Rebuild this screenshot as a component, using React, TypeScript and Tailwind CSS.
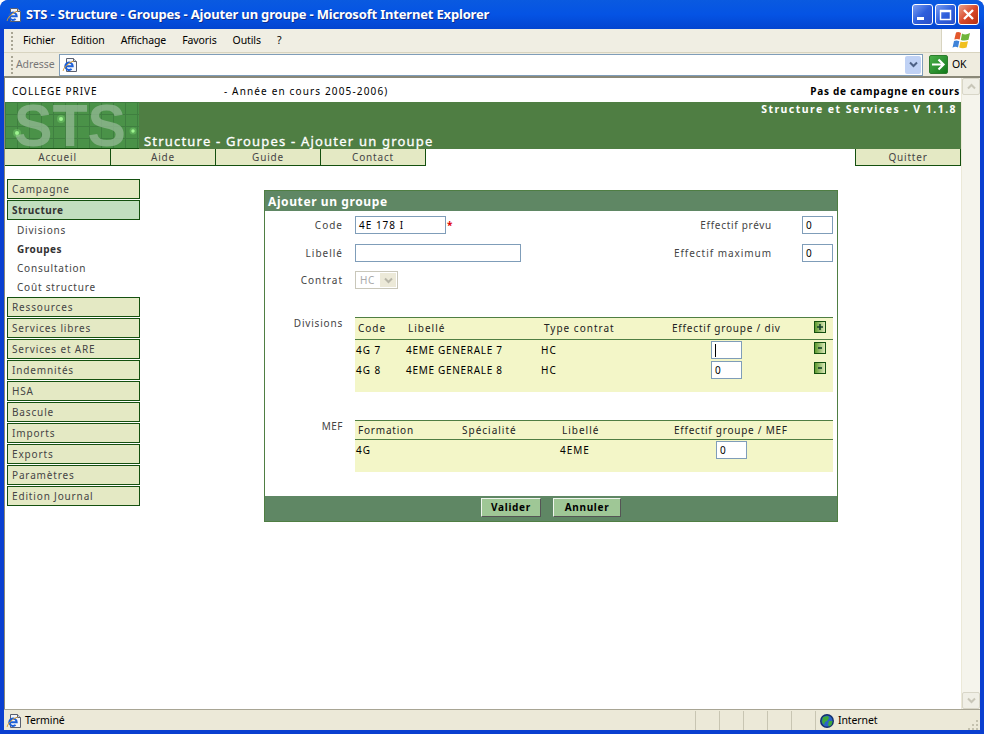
import React from "react";

const IeIcon = ({ size = 16 }: { size?: number }) => (
  <svg width={size} height={size} viewBox="0 0 16 16" className="shrink-0">
    <path d="M4.5 1.5h7l3 3v10h-10z" fill="#f4f6fa" stroke="#5a6070" strokeWidth="1" />
    <path d="M11.5 1.5v3h3" fill="#cfd4de" stroke="#5a6070" strokeWidth="1" />
    <path d="M3.5 9.2h7.2a3.7 3.7 0 1 0-1.1 2.7" fill="none" stroke="#1c5fd8" strokeWidth="2" />
    <path d="M1.2 13.8C1 11.5 7 5 11.5 4.2" fill="none" stroke="#d99a28" strokeWidth="1" />
  </svg>
);

const WinBtn = ({ kind }: { kind: "min" | "max" | "close" }) => (
  <div
    className={
      kind === "close"
        ? "w-[21px] h-[21px] rounded-[3px] border border-white bg-gradient-to-br from-[#e8a08a] via-[#d9482a] to-[#b5300f] flex items-center justify-center"
        : "w-[21px] h-[21px] rounded-[3px] border border-white bg-gradient-to-br from-[#7d9df0] via-[#2f5fdc] to-[#2a4fc8] flex items-center justify-center"
    }
  >
    <svg width="15" height="15" viewBox="0 0 15 15">
      {kind === "min" && <rect x="2" y="10" width="7" height="3" fill="#fff" />}
      {kind === "max" && (
        <path d="M2.5 3.5h10v9h-10z M2.5 4.5h10" fill="none" stroke="#fff" strokeWidth="1.5" />
      )}
      {kind === "close" && <path d="M3 3l9 9M12 3l-9 9" stroke="#fff" strokeWidth="2.4" />}
    </svg>
  </div>
);

const Grip = () => (
  <div className="w-[2px] h-[18px] ml-[7px] shrink-0 bg-[repeating-linear-gradient(to_bottom,#a8a594_0,#a8a594_2px,transparent_2px,transparent_4px)]" />
);

const XpLogo = () => (
  <svg width="20" height="19" viewBox="0 0 20 19">
    <path d="M5 1.5Q7.5.5 10 2L8.7 8.5Q6 7.3 3.3 8.5z" fill="#e2572c" />
    <path d="M11 2.5Q14.5 4.5 19 2L17.5 8.8Q13.5 10.2 9.8 9z" fill="#6fb53a" />
    <path d="M3 10Q5.5 8.8 8.3 10.2L7 16.5Q4 15 1.5 16.8z" fill="#3f83d8" />
    <path d="M9.5 10.5Q13 11.7 17 10.2L15.6 16.5Q11.5 18 8.2 16.5z" fill="#f0c020" />
  </svg>
);

const Go = () => (
  <div className="w-[19px] h-[19px] rounded-[2px] bg-gradient-to-br from-[#4ab04a] to-[#0f7a1a] border border-[#2d7d2d] flex items-center justify-center">
    <svg width="15" height="13" viewBox="0 0 15 13">
      <path d="M1 6.5h11M7.5 1.5l5 5-5 5" fill="none" stroke="#fff" strokeWidth="2.2" />
    </svg>
  </div>
);

const Chevron = ({ color, up }: { color: string; up?: boolean }) => (
  <svg width="9" height="7" viewBox="0 0 9 7">
    <path d={up ? "M1 5.5l3.5-3.5L8 5.5" : "M1 1.5l3.5 3.5L8 1.5"} fill="none" stroke={color} strokeWidth="2" />
  </svg>
);

const StsLogo = () => (
  <svg width="134" height="47" viewBox="0 0 134 47" className="shrink-0">
    <defs>
      <pattern id="g" width="12" height="12" patternUnits="userSpaceOnUse">
        <rect width="12" height="12" fill="#4a9248" />
        <path d="M0 .5h12M.5 0v12" stroke="#3f7f40" strokeWidth="1" />
      </pattern>
    </defs>
    <rect width="134" height="47" fill="url(#g)" />
    <text x="9" y="44" fontFamily="'Liberation Sans',sans-serif" fontWeight="700" fontSize="60" fill="#94b894" fillOpacity="0.75" textLength="112" lengthAdjust="spacingAndGlyphs" letterSpacing="0">
      STS
    </text>
    <circle cx="56" cy="17" r="4" fill="#8ff080" fillOpacity="0.3" />
    <circle cx="56" cy="17" r="2" fill="#9ff590" />
    <circle cx="12" cy="31" r="4" fill="#8ff080" fillOpacity="0.3" />
    <circle cx="12" cy="31" r="2" fill="#9ff590" />
    <circle cx="128" cy="29" r="3.5" fill="#8ff080" fillOpacity="0.3" />
    <circle cx="128" cy="29" r="1.7" fill="#9ff590" />
    <rect y="46" width="134" height="1" fill="#14500f" />
  </svg>
);

const NavCell = ({ label, w }: { label: string; w: string }) => (
  <div className={`${w} h-[17px] bg-[#e4e9c4] border-r border-b border-[#14500f] text-center text-[#444] leading-[16px] tracking-[0.8px]`}>{label}</div>
);

const SideBtn = ({ label, active }: { label: string; active?: boolean }) => (
  <div
    className={
      active
        ? "h-[20px] mb-[1px] pl-[4px] border border-[#14500f] bg-[#c2dfc0] text-[#333] font-bold leading-[19px] tracking-[0.5px]"
        : "h-[20px] mb-[1px] pl-[4px] border border-[#14500f] bg-[#e4e9c4] text-[#444] leading-[19px] tracking-[0.85px]"
    }
  >
    {label}
  </div>
);

const SubItem = ({ label, bold }: { label: string; bold?: boolean }) => (
  <div className={bold ? "h-[19px] pl-[10px] leading-[19px] text-[#333] font-bold tracking-[0.5px]" : "h-[19px] pl-[10px] leading-[19px] text-[#444] tracking-[0.8px]"}>{label}</div>
);

const Field = ({ w, value, caret }: { w: string; value?: string; caret?: boolean }) => (
  <div className={`${w} h-[18px] shrink-0 bg-white border border-[#7f9db9] pl-[3px] leading-[16px] text-black flex items-center`}>
    {caret ? <div className="w-px h-[13px] bg-black" /> : value}
  </div>
);

const SmallBtn = ({ plus }: { plus?: boolean }) => (
  <div className="w-[12px] h-[12px] border border-[#14500f] bg-gradient-to-r from-[#5d9a2d] to-[#dfe9b8] flex items-center justify-center">
    <svg width="6" height="6" viewBox="0 0 6 6">
      <path d={plus ? "M0 3h6M3 0v6" : "M1 3h4"} stroke="#143f2a" strokeWidth="1.6" />
    </svg>
  </div>
);

const Bevel = ({ label, w }: { label: string; w: string }) => (
  <div className={`${w} h-[19px] bg-[#9fc796] border border-t-[#f0f5ee] border-l-[#f0f5ee] border-r-[#555] border-b-[#555] text-center font-bold text-black leading-[17px] text-[10px] tracking-[0.7px]`}>{label}</div>
);

const Globe = () => (
  <svg width="16" height="16" viewBox="0 0 16 16" className="shrink-0">
    <circle cx="8" cy="8" r="7" fill="#14306e" />
    <circle cx="8" cy="8" r="5.5" fill="#2a63c8" />
    <path d="M4 4l5-1 1 2-2 3-2 1-1 3-2-3zM10 8l3.5 0-1 4-2.5 1.5-1-2z" fill="#3fa83a" />
  </svg>
);

const ResizeGrip = () => (
  <svg width="12" height="12" viewBox="0 0 12 12" className="shrink-0">
    <path d="M9 2h2v2H9zM5 6h2v2H5zM9 6h2v2H9zM1 10h2v2H1zM5 10h2v2H5zM9 10h2v2H9z" fill="#c4c1ae" />
  </svg>
);

const menu = ["Fichier", "Edition", "Affichage", "Favoris", "Outils", "?"];
const sideTop = ["Ressources", "Services libres", "Services et ARE", "Indemnités", "HSA", "Bascule", "Imports", "Exports", "Paramètres", "Edition Journal"];

export default function App() {
  return (
    <div className="w-[984px] h-[734px] overflow-hidden flex flex-col bg-[#0a3fd0] rounded-t-[8px] [font-family:'DejaVu_Sans',Verdana,sans-serif] text-[10px] tracking-[1px]">
      {/* Title bar */}
      <div className="h-[29px] shrink-0 flex items-center pl-[6px] pr-[5px] rounded-t-[8px] bg-gradient-to-b from-[#0a5ae0] via-[#0553e4] to-[#0345d0]">
        <IeIcon />
        <div className="ml-[4px] pt-px flex-1 text-white font-bold text-[13px] tracking-[-0.18px] [font-family:'Liberation_Sans',sans-serif] [text-shadow:1px_1px_#0f2f90]">
          STS - Structure - Groupes - Ajouter un groupe - Microsoft Internet Explorer
        </div>
        <div className="flex gap-[2px]">
          <WinBtn kind="min" />
          <WinBtn kind="max" />
          <WinBtn kind="close" />
        </div>
      </div>

      <div className="flex-1 min-h-0 flex flex-col mx-[4px] mb-[4px] bg-[#ece9d8]">
        {/* Menu bar */}
        <div className="h-[24px] shrink-0 flex items-center bg-[#f0eee3] border-b border-[#d8d4c0] tracking-[-0.1px] text-[10.5px] [font-family:'Liberation_Sans',sans-serif] text-black">
          <Grip />
          <div className="flex flex-1 ml-[10px] gap-[16px]">
            {menu.map((m) => (
              <span key={m}>{m}</span>
            ))}
          </div>
          <div className="w-[39px] h-full bg-white border-l border-[#d8d4c0] flex items-center justify-center">
            <XpLogo />
          </div>
        </div>
        {/* Address bar */}
        <div className="h-[25px] shrink-0 flex items-center bg-[#efecdf] border-b-2 border-[#8a8878] tracking-[-0.1px] text-[10.5px] [font-family:'Liberation_Sans',sans-serif]">
          <Grip />
          <span className="ml-[2px] w-[44px] pl-px text-[#777]">Adresse</span>
          <div className="w-[864px] h-[22px] bg-white border border-[#7f9db9] flex items-center pl-[2px] pr-[1px]">
            <IeIcon />
            <div className="flex-1" />
            <div className="w-[16px] h-[18px] rounded-[2px] bg-[#c0d2f5] flex items-center justify-center">
              <Chevron color="#4d6185" />
            </div>
          </div>
          <div className="ml-[6px]">
            <Go />
          </div>
          <span className="ml-[4px] text-black">OK</span>
        </div>

        {/* Page + scrollbar */}
        <div className="flex-1 min-h-0 flex border-l border-[#8a8878]">
          <div className="flex-1 min-w-0 bg-white flex flex-col">
            <div className="h-[24px] shrink-0 flex items-center text-black pl-[7px] pr-px pt-[3px]">
              <span className="w-[212px]">COLLEGE PRIVE</span>
              <span className="flex-1 tracking-[1.15px]">- Année en cours 2005-2006)</span>
              <span className="font-bold tracking-[0.75px]">Pas de campagne en cours</span>
            </div>
            <div className="h-[47px] shrink-0 flex bg-[#4f7e43] text-white">
              <StsLogo />
              <div className="flex-1 flex flex-col justify-between pl-[5px] pr-[4px] pb-px font-bold">
                <div className="text-right text-[10.5px] leading-[14px] tracking-[1.45px]">Structure et Services - V 1.1.8</div>
                <div className="text-[13px] leading-[14px] font-normal tracking-[1.2px] [-webkit-text-stroke:0.3px_#fff]">Structure - Groupes - Ajouter un groupe</div>
              </div>
            </div>
            <div className="h-[17px] shrink-0 flex">
              <NavCell label="Accueil" w="w-[106px]" />
              <NavCell label="Aide" w="w-[105px]" />
              <NavCell label="Guide" w="w-[105px]" />
              <NavCell label="Contact" w="w-[105px]" />
              <div className="flex-1" />
              <div className="w-[106px] h-[17px] bg-[#e4e9c4] border border-t-0 border-[#14500f] text-center text-[#444] leading-[16px] tracking-[0.8px]">Quitter</div>
            </div>

            <div className="flex-1 flex">
              <div className="w-[133px] ml-[2px] mt-[13px] shrink-0">
                <SideBtn label="Campagne" />
                <SideBtn label="Structure" active />
                <div>
                  <SubItem label="Divisions" />
                  <SubItem label="Groupes" bold />
                  <SubItem label="Consultation" />
                  <SubItem label="Coût structure" />
                </div>
                {sideTop.map((s) => (
                  <SideBtn key={s} label={s} />
                ))}
              </div>

              {/* Form */}
              <div className="w-[574px] h-[332px] ml-[124px] mt-[24px] border border-[#4f7e43] flex flex-col text-[#444]">
                <div className="h-[20px] shrink-0 bg-[#5f8764] text-white font-bold text-[12px] leading-[21px] pl-[3px] tracking-[0.6px]">Ajouter un groupe</div>
                <div className="flex-1 pt-[5px]">
                  <div className="flex h-[18px] items-center">
                    <div className="w-[78px] text-right">Code</div>
                    <div className="ml-[12px]"><Field w="w-[91px]" value="4E 178 I" /></div>
                    <span className="ml-px text-[#e00000] font-bold">*</span>
                    <div className="flex-1 text-right tracking-[0.7px]">Effectif prévu</div>
                    <div className="ml-[30px] mr-[4px]"><Field w="w-[31px]" value="0" /></div>
                  </div>
                  <div className="flex h-[18px] items-center mt-[10px]">
                    <div className="w-[78px] text-right">Libellé</div>
                    <div className="ml-[12px]"><Field w="w-[166px]" /></div>
                    <div className="flex-1 text-right tracking-[0.95px]">Effectif maximum</div>
                    <div className="ml-[30px] mr-[4px]"><Field w="w-[31px]" value="0" /></div>
                  </div>
                  <div className="flex h-[18px] items-center mt-[9px]">
                    <div className="w-[78px] text-right">Contrat</div>
                    <div className="ml-[12px] w-[43px] h-[18px] border border-[#c9c7ba] flex items-center pl-[4px] pr-px text-[#aaa] tracking-[0.5px]">
                      <span className="flex-1">HC</span>
                      <div className="w-[16px] h-[14px] bg-[#ece9d8] flex items-center justify-center">
                        <Chevron color="#b8b6a8" />
                      </div>
                    </div>
                  </div>

                  {/* Divisions */}
                  <div className="flex mt-[28px]">
                    <div className="w-[78px] text-right leading-[13px] tracking-[0.8px]">Divisions</div>
                    <div className="ml-[12px] w-[478px] h-[75px] bg-[#f3f6c8] text-black">
                      <div className="h-[23px] border-y border-[#4f7e43] flex items-center text-[#222]">
                        <div className="w-[53px] pl-[3px]">Code</div>
                        <div className="w-[136px]">Libellé</div>
                        <div className="w-[128px]">Type contrat</div>
                        <div className="w-[142px] tracking-[0.8px]">Effectif groupe / div</div>
                        <div className="self-start mt-[3px]"><SmallBtn plus /></div>
                      </div>
                      <div className="flex h-[18px] items-center mt-px">
                        <div className="w-[51px] pl-px">4G 7</div>
                        <div className="w-[135px] tracking-[0.7px]">4EME GENERALE 7</div>
                        <div className="w-[170px]">HC</div>
                        <Field w="w-[31px]" caret />
                        <div className="ml-[72px] self-start mt-px"><SmallBtn /></div>
                      </div>
                      <div className="flex h-[18px] items-center mt-[2px]">
                        <div className="w-[51px] pl-px">4G 8</div>
                        <div className="w-[135px] tracking-[0.7px]">4EME GENERALE 8</div>
                        <div className="w-[170px]">HC</div>
                        <Field w="w-[31px]" value="0" />
                        <div className="ml-[72px] self-start mt-px"><SmallBtn /></div>
                      </div>
                    </div>
                  </div>

                  {/* MEF */}
                  <div className="flex mt-[28px]">
                    <div className="w-[78px] text-right leading-[13px] tracking-[0.5px]">MEF</div>
                    <div className="ml-[12px] w-[478px] h-[52px] bg-[#f3f6c8] text-black">
                      <div className="h-[20px] border-y border-[#4f7e43] flex items-center text-[#222]">
                        <div className="w-[107px] pl-[3px] tracking-[0.8px]">Formation</div>
                        <div className="w-[100px]">Spécialité</div>
                        <div className="w-[112px]">Libellé</div>
                        <div className="tracking-[0.75px]">Effectif groupe / MEF</div>
                      </div>
                      <div className="flex h-[18px] items-center mt-px">
                        <div className="w-[205px] pl-px">4G</div>
                        <div className="w-[156px]">4EME</div>
                        <Field w="w-[31px]" value="0" />
                      </div>
                    </div>
                  </div>
                </div>
                <div className="h-[25px] shrink-0 bg-[#5f8764] flex items-start justify-center pt-[2px] gap-[12px]">
                  <Bevel label="Valider" w="w-[60px]" />
                  <Bevel label="Annuler" w="w-[68px]" />
                </div>
              </div>
            </div>
          </div>

          {/* Scrollbar */}
          <div className="w-[19px] shrink-0 bg-[#f5f4ec] flex flex-col justify-between border-l border-[#ece9d8]">
            <div className="h-[17px] bg-[#f0efe6] border border-[#d8d6c8] rounded-[2px] flex items-center justify-center">
              <Chevron color="#c8c6b8" up />
            </div>
            <div className="h-[17px] bg-[#f0efe6] border border-[#d8d6c8] rounded-[2px] flex items-center justify-center">
              <Chevron color="#c8c6b8" />
            </div>
          </div>
        </div>

        {/* Status bar */}
        <div className="h-[21px] shrink-0 flex items-center pt-px bg-[#ece9d8] border-t border-[#a8a594] tracking-[-0.1px] text-[10.5px] [font-family:'Liberation_Sans',sans-serif] text-black">
          <div className="ml-[2px]"><IeIcon /></div>
          <span className="ml-[3px] flex-1">Terminé</span>
          <div className="h-full w-[24px] border-l border-[#c8c5b2]" />
          <div className="h-full w-[24px] border-l border-[#c8c5b2]" />
          <div className="h-full w-[24px] border-l border-[#c8c5b2]" />
          <div className="h-full w-[24px] border-l border-[#c8c5b2]" />
          <div className="h-full w-[24px] border-l border-[#c8c5b2]" />
          <div className="h-full w-[165px] border-l border-[#c8c5b2] flex items-center pl-[3px] pr-[1px]">
            <Globe />
            <span className="ml-[3px] flex-1">Internet</span>
            <div className="self-end"><ResizeGrip /></div>
          </div>
        </div>
      </div>
    </div>
  );
}
